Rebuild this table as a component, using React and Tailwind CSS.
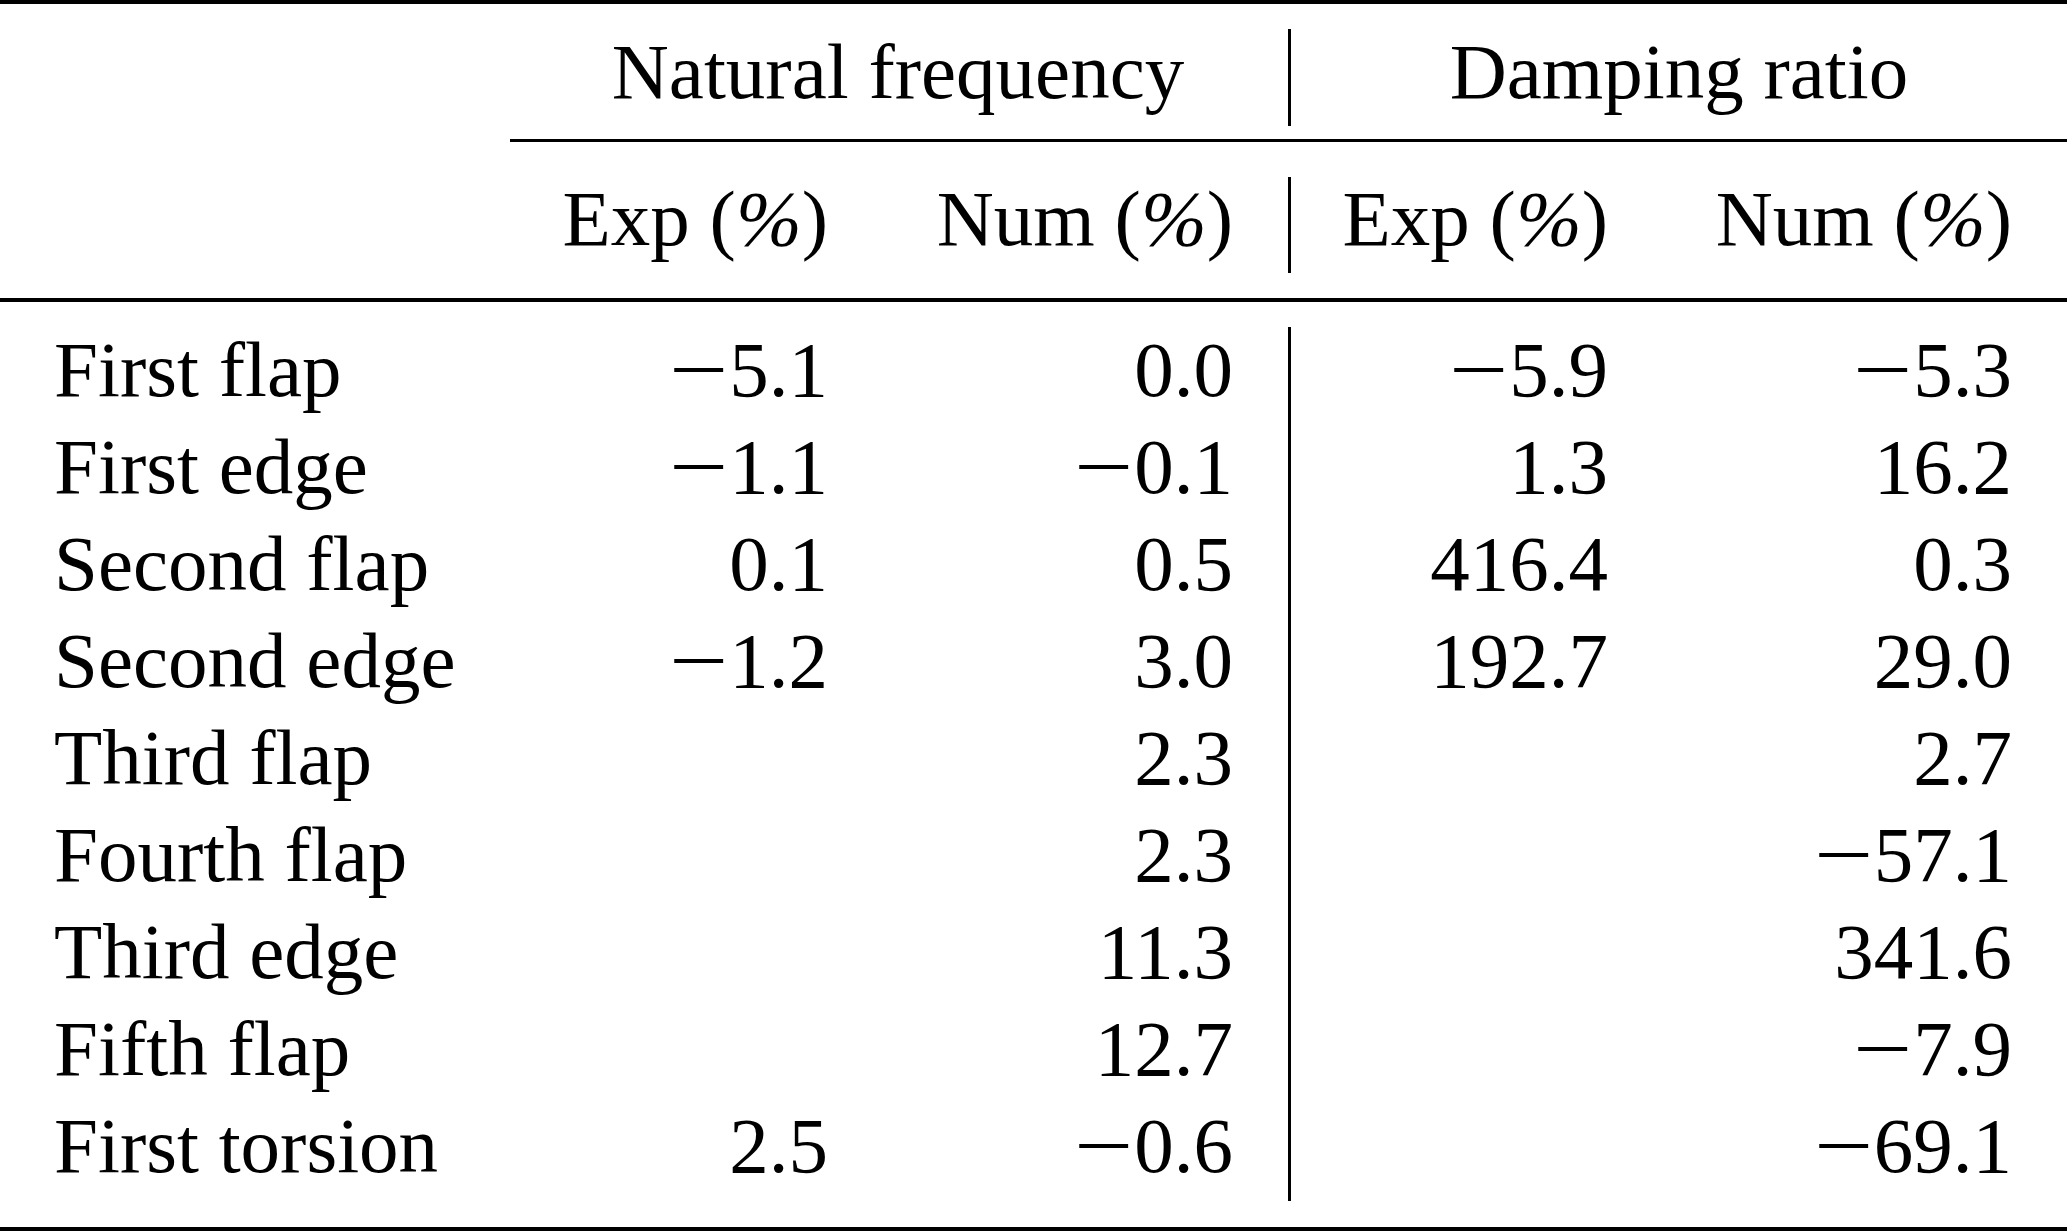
const rows = [
  ["First flap", "−5.1", "0.0", "−5.9", "−5.3"],
  ["First edge", "−1.1", "−0.1", "1.3", "16.2"],
  ["Second flap", "0.1", "0.5", "416.4", "0.3"],
  ["Second edge", "−1.2", "3.0", "192.7", "29.0"],
  ["Third flap", "", "2.3", "", "2.7"],
  ["Fourth flap", "", "2.3", "", "−57.1"],
  ["Third edge", "", "11.3", "", "341.6"],
  ["Fifth flap", "", "12.7", "", "−7.9"],
  ["First torsion", "2.5", "−0.6", "", "−69.1"],
];

function Pct({ label }) {
  return (
    <span>
      {label} (<span className="italic">%</span>)
    </span>
  );
}

// math minus is wider than the text one, stretch it a bit
function Num({ value }) {
  if (!value.startsWith("−")) return value;
  return (
    <>
      <span className="inline-block w-[60px] text-left">
        <span className="inline-block origin-left scale-x-[1.33]">−</span>
      </span>
      {value.slice(1)}
    </>
  );
}

export default function App() {
  return (
    <div className="w-[2067px] h-[1231px] bg-white text-black text-[79px] leading-[97px] font-['Liberation_Serif','Times_New_Roman',serif] whitespace-nowrap">
      {/* top rule */}
      <div className="h-[4px] bg-black" />

      {/* group headings */}
      <div className="flex h-[135px]">
        <div className="w-[1288px] flex pt-[19px]">
          <div className="w-[508px]" />
          <div className="w-[780px] text-center">Natural frequency</div>
        </div>
        <div className="w-[3px] mt-[25px] h-[97px] bg-black" />
        <div className="w-[776px] text-center pt-[19px]">Damping ratio</div>
      </div>

      {/* cmidrule */}
      <div className="h-[3px] ml-[510px] bg-black" />

      {/* column headings */}
      <div className="flex h-[156px]">
        <div className="w-[1288px] flex pt-[28px]">
          <div className="w-[508px]" />
          <div className="w-[375px] text-right pr-[55px]"><Pct label="Exp" /></div>
          <div className="w-[405px] text-right pr-[55px]"><Pct label="Num" /></div>
        </div>
        <div className="w-[3px] mt-[35px] h-[96px] bg-black" />
        <div className="w-[776px] flex pt-[28px]">
          <div className="w-[372px] text-right pr-[55px]"><Pct label="Exp" /></div>
          <div className="w-[404px] text-right pr-[55px]"><Pct label="Num" /></div>
        </div>
      </div>

      {/* midrule */}
      <div className="h-[4px] bg-black" />

      {/* body */}
      <div className="flex h-[925px]">
        <div className="w-[1288px] pt-[19px]">
          {rows.map(([name, a, b]) => (
            <div key={name} className="flex h-[97px]">
              <div className="w-[508px] pl-[54px]">{name}</div>
              <div className="w-[375px] text-right pr-[55px]"><Num value={a} /></div>
              <div className="w-[405px] text-right pr-[55px]"><Num value={b} /></div>
            </div>
          ))}
        </div>
        <div className="w-[3px] mt-[25px] h-[874px] bg-black" />
        <div className="w-[776px] pt-[19px]">
          {rows.map(([name, , , c, d]) => (
            <div key={name} className="flex h-[97px]">
              <div className="w-[372px] text-right pr-[55px]"><Num value={c} /></div>
              <div className="w-[404px] text-right pr-[55px]"><Num value={d} /></div>
            </div>
          ))}
        </div>
      </div>

      {/* bottom rule */}
      <div className="h-[4px] bg-black" />
    </div>
  );
}
